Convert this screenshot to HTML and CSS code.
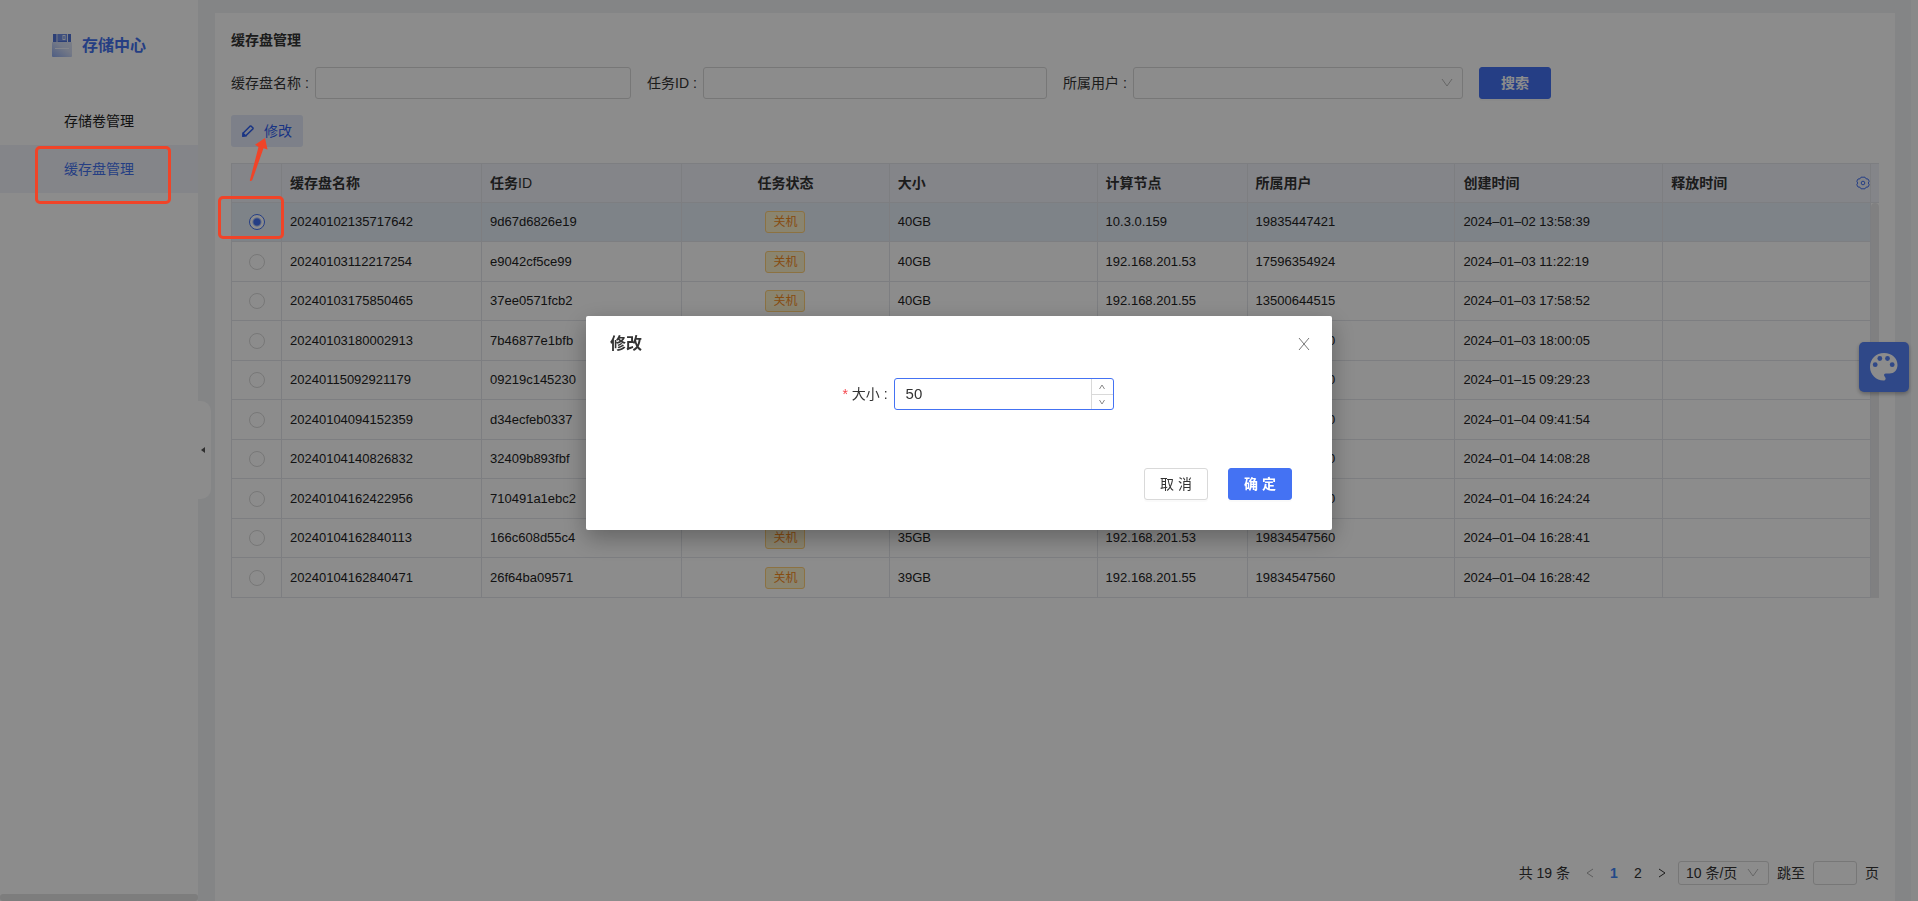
FILE: index.html
```
<!DOCTYPE html>
<html lang="zh-CN">
<head>
<meta charset="utf-8">
<meta name="viewport" content="width=device-width, initial-scale=1">
<title>存储中心</title>
<link rel="stylesheet" href="styles.css">
</head>
<body>
<div class="app">
  <aside class="sidebar">
    <div class="brand">
      <svg class="brand-icon" viewBox="0 0 20 23" aria-hidden="true">
        <defs>
          <linearGradient id="disk" x1="0" y1="1" x2="1" y2="0">
            <stop offset="0" stop-color="#8fabf0"/>
            <stop offset=".6" stop-color="#d3dcf5"/>
            <stop offset="1" stop-color="#dfe5f6"/>
          </linearGradient>
        </defs>
        <path d="M1 0h18v9H1z" fill="#5074d8"/>
        <path d="M4.500 0h1v8h-1zM15 0h1v8h-1z" fill="#e9eefc"/>
        <path d="M6 0h9v7H6z" fill="#6f8fe6"/>
        <path d="M10.500 1h3v5h-3z" fill="#e9eefc"/>
        <path d="M11.500 2h1v3h-1z" fill="#5074d8"/>
        <rect y="8" width="20" height="15" rx="1" fill="url(#disk)"/>
        <path d="M3 14.500h14" stroke="#eef2fd"/>
      </svg>
      <span class="brand-name">存储中心</span>
    </div>
    <nav class="menu">
      <a class="menu-item" href="#volumes">存储卷管理</a>
      <a class="menu-item active" href="#cache">缓存盘管理</a>
    </nav>
    <div class="side-scroll"></div>
    <button class="collapse" type="button" aria-label="收起菜单">
      <svg viewBox="0 0 4 6" aria-hidden="true"><path d="M4 0v6L0 3z" fill="#555"/></svg>
    </button>
  </aside>

  <main class="main">
    <section class="panel">
      <h1 class="title">缓存盘管理</h1>
      <form class="filters">
        <div class="field"><label for="disk-name">缓存盘名称 :</label><input class="control" id="disk-name" type="text"></div>
        <div class="field"><label for="task-id">任务ID :</label><input class="control" id="task-id" type="text"></div>
        <div class="field"><label for="owner">所属用户 :</label>
          <div class="select">
            <select class="control" id="owner"><option></option></select>
            <svg class="chevron" viewBox="0 0 12 12" aria-hidden="true"><path d="M1 2l5 7 5-7"/></svg>
          </div>
        </div>
        <button class="btn primary wide" type="button">搜索</button>
      </form>
      <div class="toolbar">
        <button class="edit" type="button">
          <svg viewBox="0 0 12 12" aria-hidden="true"><path d="M1 11V8.200L8 1.200q.6-.5 1.200 0L10.800 2.800q.5.600 0 1.200L4 10.500z"/><path d="M1 11l2.500-.3L1.300 8.500z" fill="#2f5ff0"/></svg>
          <span>修改</span>
        </button>
      </div>

      <div class="table-wrap">
        <table class="grid">
          <colgroup><col class="c-pick"><col class="c-name"><col class="c-name"><col><col><col class="c-node"><col><col><col></colgroup>
          <thead>
            <tr><th></th><th>缓存盘名称</th><th>任务<span class="plain">ID</span></th><th class="center">任务状态</th><th>大小</th><th>计算节点</th><th>所属用户</th><th>创建时间</th>
              <th class="tight"><div class="last-head"><span>释放时间</span>
                <svg viewBox="0 0 14 14" aria-hidden="true"><path d="M5 1.200h4l1 1.600 2 .2 1.200 2.200L12.300 7l.9 1.800L12 11l-2 .2-1 1.600H5l-1-1.600L2 11 .8 8.800 1.700 7 .8 5.200 2 3l2-.2z"/><circle cx="7" cy="7" r="1.800"/></svg></div></th></tr>
          </thead>
          <tbody>
            <tr class="selected"><td class="center"><input type="radio" name="row" aria-label="20240102135717642" checked></td><td>20240102135717642</td><td>9d67d6826e19</td><td class="center"><span class="tag">关机</span></td><td>40GB</td><td>10.3.0.159</td><td>19835447421</td><td>2024–01–02 13:58:39</td><td></td></tr>
            <tr><td class="center"><input type="radio" name="row" aria-label="20240103112217254"></td><td>20240103112217254</td><td>e9042cf5ce99</td><td class="center"><span class="tag">关机</span></td><td>40GB</td><td>192.168.201.53</td><td>17596354924</td><td>2024–01–03 11:22:19</td><td></td></tr>
            <tr><td class="center"><input type="radio" name="row" aria-label="20240103175850465"></td><td>20240103175850465</td><td>37ee0571fcb2</td><td class="center"><span class="tag">关机</span></td><td>40GB</td><td>192.168.201.55</td><td>13500644515</td><td>2024–01–03 17:58:52</td><td></td></tr>
            <tr><td class="center"><input type="radio" name="row" aria-label="20240103180002913"></td><td>20240103180002913</td><td>7b46877e1bfb</td><td class="center"><span class="tag">关机</span></td><td>40GB</td><td>192.168.201.55</td><td>19834547560</td><td>2024–01–03 18:00:05</td><td></td></tr>
            <tr><td class="center"><input type="radio" name="row" aria-label="20240115092921179"></td><td>20240115092921179</td><td>09219c145230</td><td class="center"><span class="tag">关机</span></td><td>40GB</td><td>192.168.201.53</td><td>19834547560</td><td>2024–01–15 09:29:23</td><td></td></tr>
            <tr><td class="center"><input type="radio" name="row" aria-label="20240104094152359"></td><td>20240104094152359</td><td>d34ecfeb0337</td><td class="center"><span class="tag">关机</span></td><td>40GB</td><td>192.168.201.53</td><td>19834547560</td><td>2024–01–04 09:41:54</td><td></td></tr>
            <tr><td class="center"><input type="radio" name="row" aria-label="20240104140826832"></td><td>20240104140826832</td><td>32409b893fbf</td><td class="center"><span class="tag">关机</span></td><td>40GB</td><td>192.168.201.55</td><td>19834547560</td><td>2024–01–04 14:08:28</td><td></td></tr>
            <tr><td class="center"><input type="radio" name="row" aria-label="20240104162422956"></td><td>20240104162422956</td><td>710491a1ebc2</td><td class="center"><span class="tag">关机</span></td><td>40GB</td><td>192.168.201.53</td><td>19834547560</td><td>2024–01–04 16:24:24</td><td></td></tr>
            <tr><td class="center"><input type="radio" name="row" aria-label="20240104162840113"></td><td>20240104162840113</td><td>166c608d55c4</td><td class="center"><span class="tag">关机</span></td><td>35GB</td><td>192.168.201.53</td><td>19834547560</td><td>2024–01–04 16:28:41</td><td></td></tr>
            <tr><td class="center"><input type="radio" name="row" aria-label="20240104162840471"></td><td>20240104162840471</td><td>26f64ba09571</td><td class="center"><span class="tag">关机</span></td><td>39GB</td><td>192.168.201.55</td><td>19834547560</td><td>2024–01–04 16:28:42</td><td></td></tr>
          </tbody>
        </table>
        <div class="rail"><div class="rail-head"></div><div class="rail-track"></div></div>
      </div>

      <div class="pager">
        <span class="total">共 19 条</span>
        <button class="page off" type="button" aria-label="上一页"><svg viewBox="0 0 8 12" aria-hidden="true"><path d="M7 2L1 6l6 4"/></svg></button>
        <button class="page current" type="button">1</button>
        <button class="page" type="button">2</button>
        <button class="page" type="button" aria-label="下一页"><svg viewBox="0 0 8 12" aria-hidden="true"><path d="M1 2l6 4-6 4"/></svg></button>
        <div class="select small">
          <select class="control" aria-label="每页条数"><option>10 条/页</option></select>
          <svg class="chevron" viewBox="0 0 12 12" aria-hidden="true"><path d="M1 2l5 7 5-7"/></svg>
        </div>
        <label for="jump">跳至</label>
        <input class="control jump" id="jump" type="text">
        <span>页</span>
      </div>
    </section>
  </main>
  <div class="page-scroll"></div>
</div>

<button class="theme" type="button" aria-label="主题设置">
  <svg viewBox="0 0 28 28" aria-hidden="true">
    <path d="M14 0C22 0 27.500 5 27.500 12c0 5-3.500 8.500-8 8.500H16c-2 0-2.600 1.600-1.200 3.200 1.600 1.800.8 3.800-1.300 3.800C6 27.500 0 21.500 0 14 0 6 6 0 14 0z" fill="#fff"/>
    <g fill="#5683f7"><circle cx="5.200" cy="11.700" r="2.400"/><circle cx="9.800" cy="5.500" r="2.400"/><circle cx="17.500" cy="5.500" r="2.400"/><circle cx="22.200" cy="11.700" r="2.400"/></g>
  </svg>
</button>

<div class="mask">
  <div class="modal" role="dialog" aria-modal="true" aria-labelledby="dlg-title">
    <header class="modal-head">
      <h2 id="dlg-title">修改</h2>
      <button class="close" type="button" aria-label="关闭"><svg viewBox="0 0 12 12" aria-hidden="true"><path d="M1 0l10 12M11 0L1 12"/></svg></button>
    </header>
    <div class="modal-body">
      <label for="size"><span class="star">*</span> 大小 :</label>
      <div class="number">
        <input id="size" type="number" value="50">
        <div class="steps">
          <button type="button" aria-label="增加"><svg viewBox="0 0 6 6" aria-hidden="true"><path d="M.5 5L3 1l2.500 4"/></svg></button>
          <button type="button" aria-label="减少"><svg viewBox="0 0 6 6" aria-hidden="true"><path d="M.5 1L3 5l2.500-4"/></svg></button>
        </div>
      </div>
    </div>
    <footer class="modal-foot">
      <button class="btn" type="button">取 消</button>
      <button class="btn primary" type="button">确 定</button>
    </footer>
  </div>
</div>

<div class="mark mark-menu"></div>
<div class="mark mark-radio"></div>
<svg class="mark-arrow" viewBox="0 0 20 44" aria-hidden="true"><path d="M16 0l2.500 11.500-4-1.200L3.500 41.500Q2 44 .8 42.500L9.500 9 6 6.800z" fill="#f04428"/></svg>
</body>
</html>
```
FILE: styles.css
```
* { box-sizing: border-box; }
body {
  margin: 0;
  color: #333;
  font: 14px/22px "Liberation Sans", "Noto Sans CJK SC", sans-serif;
}
button, input, select { font: inherit; color: inherit; margin: 0; }
button { cursor: pointer; padding: 0; border: 0; background: none; }
svg { display: block; fill: none; }

.app { display: flex; min-height: 100vh; background: #f0f2f5; }

.sidebar {
  position: relative;
  display: flex;
  flex-direction: column;
  flex: 0 0 198px;
  background: #fff;
}
.brand { display: flex; align-items: center; gap: 10px; height: 97px; padding: 0 0 6px 52px; }
.brand-icon { width: 20px; height: 23px; }
.brand-name { color: #4472ef; font-size: 16px; font-weight: 700; }
.menu { display: flex; flex-direction: column; }
.menu-item { height: 48px; padding-left: 64px; line-height: 48px; color: #222; text-decoration: none; }
.menu-item.active { color: #4472ef; background: #f0f3fa; }
.side-scroll { height: 7px; margin-top: auto; border-radius: 3px; background: #e4e4e4; }
.collapse {
  position: absolute;
  top: calc(50% - 50px);
  left: 100%;
  display: flex;
  align-items: center;
  width: 13px;
  height: 98px;
  padding-left: 3px;
  border-radius: 0 10px 10px 0;
  background: #fff;
}
.collapse svg { width: 4px; height: 6px; }

.main { display: flex; flex: 1; min-width: 0; padding: 13px 16px 0 17px; }
.page-scroll { width: 7px; background: #fafafa; }
.panel { display: flex; flex-direction: column; gap: 16px; flex: 1; min-width: 0; padding: 16px; background: #fff; }
.title { margin: 0; font-size: 14px; font-weight: 700; }

.filters { display: flex; gap: 16px; }
.field { display: flex; align-items: center; gap: 6px; flex: 0 1 400px; min-width: 0; }
.field label { white-space: nowrap; }
.control {
  flex: 1;
  min-width: 0;
  width: 100%;
  height: 32px;
  padding: 0 7px;
  border: 1px solid #d9d9d9;
  border-radius: 3px;
  background: #fff;
}
.select { display: grid; flex: 1; align-items: center; }
.select > * { grid-area: 1 / 1; }
.select select { appearance: none; }
.chevron { justify-self: end; width: 12px; height: 12px; margin-right: 10px; stroke: #bbb; pointer-events: none; }
.btn {
  min-width: 64px;
  height: 32px;
  border: 1px solid #d9d9d9;
  border-radius: 3px;
  background: #fff;
  box-shadow: 0 2px 0 rgba(0, 0, 0, 0.02);
}
.btn.primary { border-color: #4472f3; color: #fff; background: #4472f3; font-weight: 700; }
.btn.wide { flex: 0 0 72px; }

.toolbar { display: flex; }
.edit {
  display: flex;
  align-items: center;
  gap: 10px;
  height: 32px;
  padding: 0 11px;
  border-radius: 3px;
  color: #2f5ff0;
  background: #e3eafa;
}
.edit svg { width: 12px; height: 12px; stroke: #2f5ff0; stroke-width: 1.500; }

.table-wrap { display: flex; border: solid #e4e6eb; border-width: 1px 0 0 1px; }
.grid { flex: 1; width: 0; table-layout: fixed; border-spacing: 0; font-size: 13px; color: #222; }
.c-pick { width: 50px; }
.c-name { width: 200px; }
.c-node { width: 150px; }
.grid th, .grid td {
  height: 39px;
  padding: 0 8px;
  border: solid #e4e6eb;
  border-width: 0 1px 1px 0;
  text-align: left;
  white-space: nowrap;
}
.grid th { font-size: 14px; font-weight: 700; color: #333; background: #f0f2fa; }
.grid .plain { font-weight: 400; }
.grid .tight { padding-right: 0; }
.grid tbody tr:nth-child(even) td { height: 40px; }
.grid .selected td { background: #e6eef8; }
.grid .center { text-align: center; }
.grid input[type="radio"] {
  appearance: none;
  display: block;
  width: 16px;
  height: 16px;
  margin: 0 auto;
  border: 1px solid #d9d9d9;
  border-radius: 50%;
}
.grid input[type="radio"]:checked {
  border-color: #4472f3;
  background: radial-gradient(circle, #4472f3 3px, #fff 5px);
}
.last-head { display: flex; align-items: center; justify-content: space-between; }
.last-head svg { width: 14px; height: 14px; stroke: #4472f3; }
.tag {
  display: inline-block;
  height: 22px;
  padding: 0 7px;
  border: 1px solid #ffcf78;
  border-radius: 3px;
  color: #f58b1d;
  background: #fcf2cd;
  font-size: 12px;
  line-height: 20px;
  vertical-align: middle;
}
.rail { display: flex; flex-direction: column; width: 8px; }
.rail-head { height: 39px; border-bottom: 1px solid #e4e6eb; background: #f0f2fa; }
.rail-track { flex: 1; border-radius: 4px 4px 0 0; background: #eaeaec; }

.pager { display: flex; align-items: center; justify-content: flex-end; gap: 8px; margin-top: auto; }
.total { margin-right: 4px; }
.page { display: grid; place-items: center; width: 16px; height: 24px; }
.page svg { width: 8px; height: 12px; stroke: #333; }
.page.off svg { stroke: #aaa; }
.page.current { color: #3f86f7; font-weight: 700; }
.pager .control { height: 24px; }
.pager .small { flex: 0 0 91px; }
.pager .jump { flex: 0 0 44px; }

.theme {
  position: fixed;
  top: 342px;
  right: 9px;
  display: grid;
  place-items: center;
  width: 50px;
  height: 50px;
  border-radius: 5px;
  background: #5683f7;
  box-shadow: 0 2px 4px rgba(0, 0, 0, 0.3);
}
.theme svg { width: 28px; height: 28px; }

.mask {
  position: fixed;
  inset: 0;
  display: flex;
  align-items: flex-start;
  justify-content: center;
  padding-top: calc(35vh + 1px);
  background: rgba(0, 0, 0, 0.45);
}
.modal {
  display: flex;
  flex-direction: column;
  width: 746px;
  max-width: 100%;
  padding: 16px 0 30px;
  border-radius: 2px;
  background: #fff;
  box-shadow: 0 8px 24px rgba(0, 0, 0, 0.3);
}
.modal-head { display: flex; align-items: center; justify-content: space-between; padding: 0 22px 0 24px; }
.modal-head h2 { margin: 0; font-size: 16px; line-height: 24px; font-weight: 700; }
.close svg { width: 12px; height: 12px; stroke: #777; }
.modal-body { display: flex; align-items: center; justify-content: center; gap: 6px; padding: 22px 0 58px 38px; }
.star { color: #f5454c; }
.number { display: flex; width: 220px; height: 32px; border: 1px solid #4472f3; border-radius: 3px; }
.number input {
  flex: 1;
  min-width: 0;
  padding: 0 11px;
  border: 0;
  outline: 0;
  background: none;
  font-size: 15px;
  appearance: textfield;
}
.number input::-webkit-inner-spin-button { appearance: none; }
.steps { display: flex; flex-direction: column; width: 22px; border-left: 1px solid #d9d9d9; }
.steps button { display: grid; flex: 1; place-items: center; }
.steps button + button { border-top: 1px solid #d9d9d9; }
.steps svg { width: 6px; height: 6px; stroke: #888; }
.modal-foot { display: flex; justify-content: flex-end; gap: 20px; padding-right: 40px; }

.mark { position: absolute; border: 3px solid #f04428; border-radius: 5px; pointer-events: none; }
.mark-menu { top: 146px; left: 35px; width: 136px; height: 58px; }
.mark-radio { top: 196px; left: 218px; width: 66px; height: 43px; }
.mark-arrow { position: absolute; top: 138px; left: 249px; width: 20px; height: 44px; pointer-events: none; }
```
